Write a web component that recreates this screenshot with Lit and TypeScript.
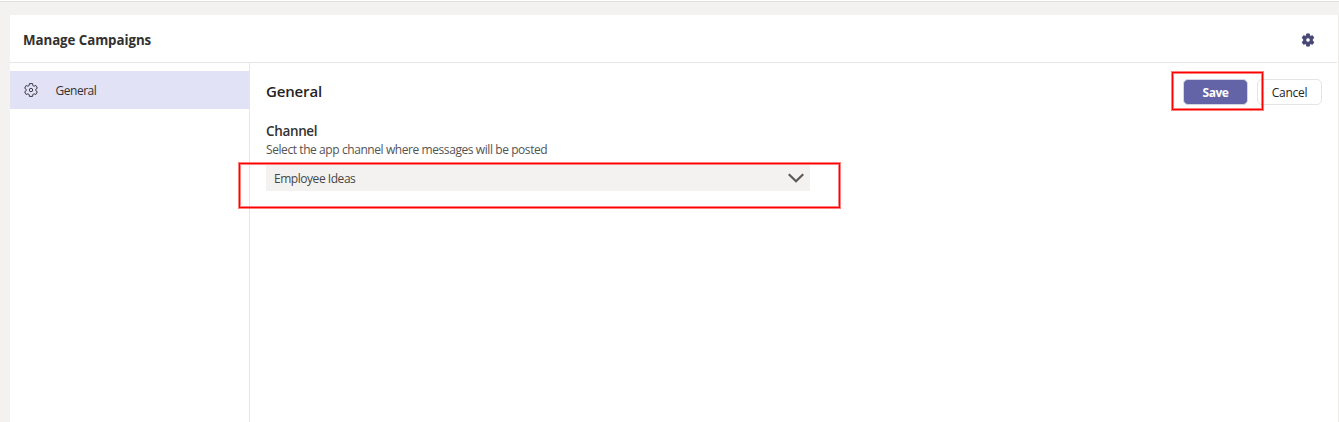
import { LitElement, html, css, svg } from "lit";
import { customElement } from "lit/decorators.js";

const gearPoints = (c: number, tip: number, root: number) => {
  const pts: string[] = [];
  for (let i = 0; i < 6; i++) {
    const a = (i * 60 - 90) * (Math.PI / 180);
    for (const [d, r] of [[-21, root], [-14, tip], [14, tip], [21, root]]) {
      const t = a + (d * Math.PI) / 180;
      pts.push(`${(c + r * Math.cos(t)).toFixed(2)},${(c + r * Math.sin(t)).toFixed(2)}`);
    }
  }
  return pts.join(" ");
};

@customElement("app-root")
export class AppRoot extends LitElement {
  static styles = css`
    :host {
      display: block;
      box-sizing: border-box;
      height: 422px;
      overflow: hidden;
      padding: 1px 0 0;
      position: relative;
      background: #fff;
      color: #252423;
      font: 12px/16px "Open Sans", "Noto Sans", sans-serif;
      white-space: nowrap;
    }
    .page {
      box-sizing: border-box;
      height: 421px;
      border-top: 1px solid #e1dfdd;
      background: #f3f2f1;
      padding: 13px 0 0 10px;
    }
    .card {
      box-sizing: border-box;
      height: 407px;
      background: #fff;
      border-right: 1px solid #edebe9;
      display: flex;
      flex-direction: column;
    }
    header {
      box-sizing: border-box;
      height: 48px;
      margin-right: 1px;
      padding: 2px 22px 0 13px;
      border-bottom: 1px solid #e6e6e6;
      display: flex;
      align-items: center;
      justify-content: space-between;
    }
    svg { display: block; }
    .title { font-size: 13.3px; font-weight: 700; letter-spacing: -0.06px; color: #323130; }
    .body { flex: 1; display: flex; }
    nav { box-sizing: border-box; width: 240px; border-right: 1px solid #e6e6e6; padding-top: 8px; }
    .item { height: 38px; background: #e2e2f6; display: flex; align-items: center; gap: 17px; padding-left: 14px; }
    .item-label { letter-spacing: -0.48px; padding: 1px 0 0 0.5px; color: #323130; }
    main { flex: 1; padding: 16px 16px 0; }
    .top { display: flex; justify-content: space-between; height: 26px; }
    h1 { margin: 0; font-size: 15px; line-height: 24px; font-weight: 600; letter-spacing: -0.15px; }
    .actions { display: flex; gap: 9px; }
    button {
      box-sizing: border-box;
      height: 26px;
      padding: 1px 0 0;
      border: 1px solid #e6e4e2;
      border-radius: 5px;
      background: #fff;
      color: #252423;
      font: 12px/16px "Open Sans", "Noto Sans", sans-serif;
      letter-spacing: -0.3px;
    }
    .save { width: 65px; background: #6264a7; color: #fff; font-weight: 700; border-color: #d5d4e6; letter-spacing: -0.5px; }
    .cancel { width: 65px; }
    h2 { margin: 17px 0 0; font-size: 13.5px; line-height: 18px; font-weight: 600; letter-spacing: -0.35px; color: #323130; }
    .hint { color: #555351; line-height: 17px; margin-top: 1px; letter-spacing: -0.42px; }
    .select {
      box-sizing: border-box;
      width: 544px;
      height: 26px;
      margin-top: 7px;
      padding: 0 6px 0 8px;
      background: #f3f2f1;
      color: #484644;
      display: flex;
      align-items: center;
      justify-content: space-between;
    }
    .value { letter-spacing: -0.46px; padding-top: 1px; }
    .mark {
      position: absolute;
      box-sizing: border-box;
      border: 1px solid #f00;
      box-shadow: 0 0 0 1px rgba(255, 0, 0, 0.5), inset 0 0 0 1px rgba(255, 0, 0, 0.5);
      pointer-events: none;
    }
    .mark-save { left: 1172px; top: 72px; width: 91px; height: 38px; }
    .mark-select { left: 239px; top: 163px; width: 601px; height: 45px; }
  `;

  render() {
    return html`
      <div class="page">
        <div class="card">
          <header>
            <span class="title">Manage Campaigns</span>
            <svg width="14" height="14" viewBox="0 0 14 14">
              <path fill="#464775" stroke="#464775" stroke-width="1" stroke-linejoin="round" fill-rule="evenodd"
                d="M5.7 .9h2.6l.4 1.8 1 .6 1.8-.6 1.3 2.2-1.4 1.3v1.6l1.4 1.3-1.3 2.2-1.8-.6-1 .6-.4 1.8H5.7l-.4-1.8-1-.6-1.8.6-1.3-2.2 1.4-1.3V6.200L1.200 4.900l1.300-2.200 1.800.6 1-.6zM7 4.700a2.300 2.300 0 1 0 0 4.600 2.300 2.300 0 0 0 0-4.600z"/>
            </svg>
          </header>
          <div class="body">
            <nav>
              <div class="item">
                <svg width="14" height="14" viewBox="0 0 14 14" fill="none" stroke="#3b3a45" stroke-linejoin="round">
                  ${svg`<polygon points=${gearPoints(7, 6.6, 4.9)} stroke-width="1"/>`}
                  <circle cx="7" cy="7" r="1.7" stroke-width="1"/>
                </svg>
                <span class="item-label">General</span>
              </div>
            </nav>
            <main>
              <div class="top">
                <h1>General</h1>
                <div class="actions">
                  <button class="save">Save</button>
                  <button class="cancel">Cancel</button>
                </div>
              </div>
              <h2>Channel</h2>
              <div class="hint">Select the app channel where messages will be posted</div>
              <div class="select">
                <span class="value">Employee Ideas</span>
                <svg width="16" height="10" viewBox="0 0 16 10" fill="none" stroke="#5c5a58" stroke-width="2.300">
                  <path d="M.8 1.200 8 8.200l7.200-7"/>
                </svg>
              </div>
            </main>
          </div>
        </div>
      </div>
      <div class="mark mark-save"></div>
      <div class="mark mark-select"></div>
    `;
  }
}
